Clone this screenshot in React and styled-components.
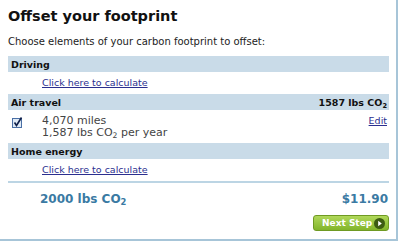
import React from 'react';
import styled, { createGlobalStyle } from 'styled-components';

const GlobalStyle = createGlobalStyle`
  body {
    margin: 0;
    background: #fff;
    font-family: "DejaVu Sans", Verdana, sans-serif;
  }
`;

const Panel = styled.div`
  width: 381px;
  height: 239px;
  padding: 0 7px 0 8px;
  border-right: 2px solid #a7c5d8;
  border-bottom: 2px solid #a7c5d8;
  box-sizing: content-box;
  color: #222;
`;

const Title = styled.h1`
  margin: 0;
  padding-top: 7px;
  font-size: 14.5px;
  font-weight: bold;
  color: #111;
  line-height: 18px;
`;

const Intro = styled.p`
  margin: 10px 0 8px;
  font-size: 10px;
  line-height: 13px;
  color: #222;
`;

const SectionBar = styled.div`
  display: flex;
  justify-content: space-between;
  align-items: center;
  height: 16px;
  padding: 0 2px 0 3px;
  background: #c9dbe8;
  font-size: 9.5px;
  font-weight: bold;
  color: #111;
`;

const Row = styled.div`
  display: flex;
  align-items: ${p => (p.$top ? 'flex-start' : 'center')};
  height: ${p => p.$h || 22}px;
  box-sizing: border-box;
  padding: ${p => (p.$top ? '5px 2px 0 34px' : '0 2px 1px 34px')};
  font-size: 11px;
  line-height: 12px;
`;

const TextLink = styled.a`
  color: #2b2f8f;
  text-decoration: underline;
  font-size: 9.5px;
  line-height: 12px;
  cursor: pointer;
`;

const Details = styled.div`
  flex: 1;
  color: #444;
`;

const Check = styled.span`
  width: 20px;
  margin-left: -30px;
  margin-right: 10px;
  padding-top: 2px;
`;

const Divider = styled.hr`
  border: 0;
  border-top: 2px solid #bcd5e4;
  margin: 0;
`;

const TotalRow = styled.div`
  display: flex;
  justify-content: space-between;
  padding: 9px 1px 0 32px;
  font-size: 12px;
  line-height: 14px;
  font-weight: bold;
  color: #3a7aa3;
`;

const Footer = styled.div`
  display: flex;
  justify-content: flex-end;
  margin-top: 9px;
`;

const NextButton = styled.button`
  display: flex;
  align-items: center;
  justify-content: space-between;
  width: 76px;
  height: 16px;
  padding: 0 3px 0 8px;
  border: 1px solid #6f9a22;
  border-radius: 3px;
  background: linear-gradient(#b0d85a, #82b52a);
  color: #fff;
  font-family: inherit;
  font-size: 9px;
  font-weight: bold;
  white-space: nowrap;
  cursor: pointer;
`;

const Sub = styled.sub`
  font-size: 0.7em;
  vertical-align: -2px;
  line-height: 0;
`;

const CheckIcon = () => (
  <svg width="11" height="11" viewBox="0 0 11 11">
    <rect x="0.5" y="1.5" width="9" height="9" fill="#dfeaf6" stroke="#4a6fa5" />
    <path d="M2.5 5.5 L4.5 8.5 L9.5 0.5" fill="none" stroke="#10204a" strokeWidth="1.6" />
  </svg>
);

const PlayIcon = () => (
  <svg width="11" height="11" viewBox="0 0 11 11">
    <circle cx="5.5" cy="5.5" r="5.5" fill="#3d5c12" />
    <path d="M4.2 2.8 L7.8 5.5 L4.2 8.2 Z" fill="#fff" />
  </svg>
);

const App = () => (
  <>
    <GlobalStyle />
    <Panel>
      <Title>Offset your footprint</Title>
      <Intro>Choose elements of your carbon footprint to offset:</Intro>

      <SectionBar>Driving</SectionBar>
      <Row>
        <TextLink>Click here to calculate</TextLink>
      </Row>

      <SectionBar>
        <span>Air travel</span>
        <span>1587 lbs CO<Sub>2</Sub></span>
      </SectionBar>
      <Row $top $h={33}>
        <Check><CheckIcon /></Check>
        <Details>
          4,070 miles<br />
          1,587 lbs CO<Sub>2</Sub> per year
        </Details>
        <TextLink>Edit</TextLink>
      </Row>

      <SectionBar>Home energy</SectionBar>
      <Row>
        <TextLink>Click here to calculate</TextLink>
      </Row>

      <Divider />
      <TotalRow>
        <span>2000 lbs CO<Sub>2</Sub></span>
        <span>$11.90</span>
      </TotalRow>
      <Footer>
        <NextButton>Next Step <PlayIcon /></NextButton>
      </Footer>
    </Panel>
  </>
);

export default App;
